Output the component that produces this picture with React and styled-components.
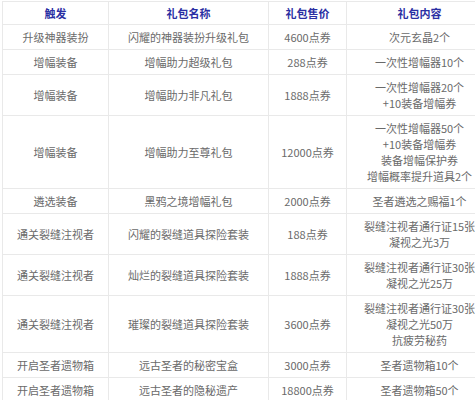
import React from "react";
import styled, { createGlobalStyle } from "styled-components";

const Global = createGlobalStyle`
  html, body { margin: 0; padding: 0; background: #fff; }
  body { font-family: "Noto Sans CJK SC", "Noto Sans", sans-serif; }
`;

const Wrap = styled.div`
  padding: 1px 3px 0 2px;
`;

const Table = styled.table`
  width: 470px;
  border-collapse: collapse;
  table-layout: fixed;
  font-size: 11px;
  color: #6a6a6a;
`;

const Th = styled.th`
  border: 1px solid #e9e9e9;
  color: #2a2fa3;
  font-weight: bold;
  font-size: 11px;
  line-height: 14px;
  padding: 4px 2px;
  text-align: center;
  width: ${(p) => p.$w}px;
`;

const Td = styled.td`
  border: 1px solid #e9e9e9;
  padding: 4px 2px;
  line-height: 16px;
  text-align: center;
  vertical-align: middle;
  white-space: nowrap;
`;

const Line = styled.div``;

const rows = [
  ["升级神器装扮", "闪耀的神器装扮升级礼包", "4600点券", ["次元玄晶2个"]],
  ["增幅装备", "增幅助力超级礼包", "288点券", ["一次性增幅器10个"]],
  ["增幅装备", "增幅助力非凡礼包", "1888点券", ["一次性增幅器20个", "+10装备增幅券"]],
  ["增幅装备", "增幅助力至尊礼包", "12000点券", ["一次性增幅器50个", "+10装备增幅券", "装备增幅保护券", "增幅概率提升道具2个"]],
  ["遴选装备", "黑鸦之境增幅礼包", "2000点券", ["圣者遴选之赐福1个"]],
  ["通关裂缝注视者", "闪耀的裂缝道具探险套装", "188点券", ["裂缝注视者通行证15张", "凝视之光3万"]],
  ["通关裂缝注视者", "灿烂的裂缝道具探险套装", "1888点券", ["裂缝注视者通行证30张", "凝视之光25万"]],
  ["通关裂缝注视者", "璀璨的裂缝道具探险套装", "3600点券", ["裂缝注视者通行证30张", "凝视之光50万", "抗疲劳秘药"]],
  ["开启圣者遗物箱", "远古圣者的秘密宝盒", "3000点券", ["圣者遗物箱10个"]],
  ["开启圣者遗物箱", "远古圣者的隐秘遗产", "18800点券", ["圣者遗物箱50个"]],
];

export default function App() {
  return (
    <Wrap>
      <Global />
      <Table>
        <thead>
          <tr>
            <Th $w={101}>触发</Th>
            <Th $w={155}>礼包名称</Th>
            <Th $w={73}>礼包售价</Th>
            <Th $w={141}>礼包内容</Th>
          </tr>
        </thead>
        <tbody>
          {rows.map((r, i) => (
            <tr key={i}>
              <Td>{r[0]}</Td>
              <Td>{r[1]}</Td>
              <Td>{r[2]}</Td>
              <Td>
                {r[3].map((l, j) => (
                  <Line key={j}>{l}</Line>
                ))}
              </Td>
            </tr>
          ))}
        </tbody>
      </Table>
    </Wrap>
  );
}
